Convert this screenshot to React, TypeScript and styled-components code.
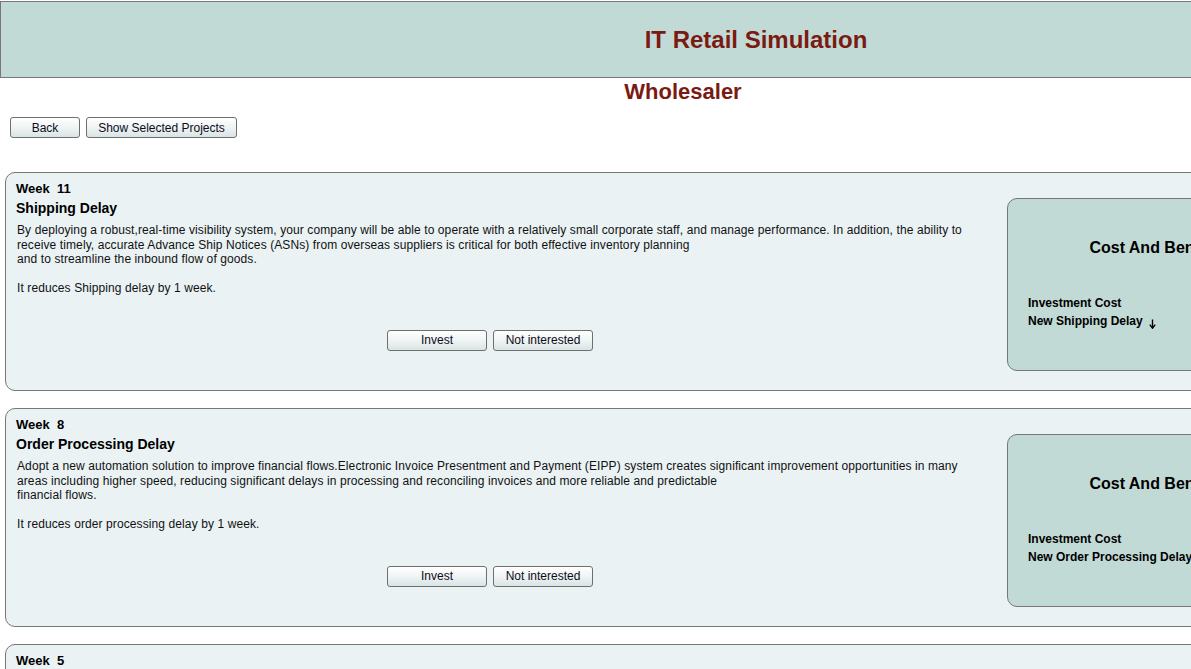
import React from "react";
import styled, { createGlobalStyle } from "styled-components";

const Global = createGlobalStyle`
  html, body { margin: 0; padding: 0; overflow: hidden; background: #fff; }
  body { font-family: "Liberation Sans", Arial, sans-serif; color: #000; }
`;

const Page = styled.div`
  width: 1512px;
  padding-top: 1px;
`;

const Header = styled.header`
  height: 75px;
  border: 1px solid #777;
  background: #c2dad6;
  display: flex;
  align-items: center;
  justify-content: center;
`;

const Title = styled.h1`
  margin: 0;
  font-size: 24px;
  line-height: 28px;
  font-weight: bold;
  color: #7b1a12;
`;

const SubTitle = styled.h2`
  width: 1366px;
  margin: 1px 0 0;
  text-align: center;
  font-size: 22px;
  line-height: 25px;
  font-weight: bold;
  color: #7b1a12;
`;

const Toolbar = styled.div`
  display: flex;
  gap: 6px;
  padding: 13px 0 0 10px;
  margin-bottom: 34px;
`;

const Button = styled.button<{ $w: number }>`
  width: ${(p) => p.$w}px;
  height: 21px;
  padding: 0;
  border: 1px solid #6f6f6f;
  border-radius: 3px;
  background: linear-gradient(#ffffff, #f1f5f5 45%, #d9e4e4);
  font-family: "Liberation Sans", Arial, sans-serif;
  font-size: 12px;
  color: #0c0c20;
  cursor: pointer;
`;

const CardList = styled.div`
  display: flex;
  flex-direction: column;
  gap: 17px;
  padding-left: 5px;
`;

const Card = styled.section`
  width: 1330px;
  height: 209px;
  border: 1px solid #777;
  border-radius: 10px;
  background: #eaf2f4;
  display: flex;
  align-items: flex-start;
  padding: 8px 0 0 10px;
  box-sizing: content-box;
  flex: 0 0 auto;
`;

const Main = styled.div`
  width: 948px;
  flex: 0 0 948px;
  display: flex;
  flex-direction: column;
`;

const Week = styled.div`
  font-size: 13px;
  line-height: 15px;
  font-weight: bold;
  white-space: pre;
`;

const ProjectName = styled.div`
  margin-top: 4px;
  font-size: 14px;
  line-height: 17px;
  font-weight: bold;
`;

const Description = styled.p`
  margin: 6px 0 0 1px;
  font-size: 12px;
  line-height: 14.5px;
  letter-spacing: 0.1px;
  white-space: nowrap;
  color: #111;
`;

const Actions = styled.div`
  margin-top: 34px;
  display: flex;
  justify-content: center;
  gap: 6px;
`;

const Panel = styled.aside`
  width: 294px;
  flex: 0 0 294px;
  height: 173px;
  margin: 17px 0 0 43px;
  border: 1px solid #777;
  border-radius: 10px;
  background: #c2dad6;
  padding: 40px 0 0 20px;
  box-sizing: border-box;
`;

const PanelTitle = styled.div`
  width: 252px;
  text-align: center;
  font-size: 16px;
  line-height: 18px;
  font-weight: bold;
  white-space: nowrap;
`;

const Rows = styled.div`
  margin-top: 37px;
  display: flex;
  flex-direction: column;
`;

const Row = styled.div`
  display: flex;
  align-items: center;
  gap: 6px;
  font-size: 12px;
  line-height: 18px;
  font-weight: bold;
  white-space: nowrap;
`;

const DownArrow = () => (
  <svg width="7" height="10" viewBox="0 0 7 10" style={{ marginTop: 5 }}>
    <path d="M3.5 0.5V8.5" stroke="#000" strokeWidth="1.4" />
    <path d="M0.8 5.6L3.5 9.2L6.2 5.6" fill="none" stroke="#000" strokeWidth="1.4" />
  </svg>
);

type Project = {
  week: string;
  name: string;
  lines: string[];
  effect: string;
  metric: string;
};

const projects: Project[] = [
  {
    week: "Week  11",
    name: "Shipping Delay",
    lines: [
      "By deploying a robust,real-time visibility system, your company will be able to operate with a relatively small corporate staff, and manage performance. In addition, the ability to",
      "receive timely, accurate Advance Ship Notices (ASNs) from overseas suppliers is critical for both effective inventory planning",
      "and to streamline the inbound flow of goods.",
    ],
    effect: "It reduces Shipping delay by 1 week.",
    metric: "New Shipping Delay",
  },
  {
    week: "Week  8",
    name: "Order Processing Delay",
    lines: [
      "Adopt a new automation solution to improve financial flows.Electronic Invoice Presentment and Payment (EIPP) system creates significant improvement opportunities in many",
      "areas including higher speed, reducing significant delays in processing and reconciling invoices and more reliable and predictable",
      "financial flows.",
    ],
    effect: "It reduces order processing delay by 1 week.",
    metric: "New Order Processing Delay",
  },
  {
    week: "Week  5",
    name: "Inventory Visibility",
    lines: ["", "", ""],
    effect: "",
    metric: "New Delay",
  },
];

export default function App() {
  return (
    <Page>
      <Global />
      <Header>
        <Title>IT Retail Simulation</Title>
      </Header>
      <SubTitle>Wholesaler</SubTitle>
      <Toolbar>
        <Button $w={70}>Back</Button>
        <Button $w={151}>Show Selected Projects</Button>
      </Toolbar>
      <CardList>
        {projects.map((p) => (
          <Card key={p.week}>
            <Main>
              <Week>{p.week}</Week>
              <ProjectName>{p.name}</ProjectName>
              <Description>
                {p.lines.map((l, i) => (
                  <React.Fragment key={i}>
                    {l}
                    <br />
                  </React.Fragment>
                ))}
                <br />
                {p.effect}
              </Description>
              <Actions>
                <Button $w={100}>Invest</Button>
                <Button $w={100}>Not interested</Button>
              </Actions>
            </Main>
            <Panel>
              <PanelTitle>Cost And Benefit</PanelTitle>
              <Rows>
                <Row>Investment Cost</Row>
                <Row>
                  {p.metric}
                  <DownArrow />
                </Row>
              </Rows>
            </Panel>
          </Card>
        ))}
      </CardList>
    </Page>
  );
}
